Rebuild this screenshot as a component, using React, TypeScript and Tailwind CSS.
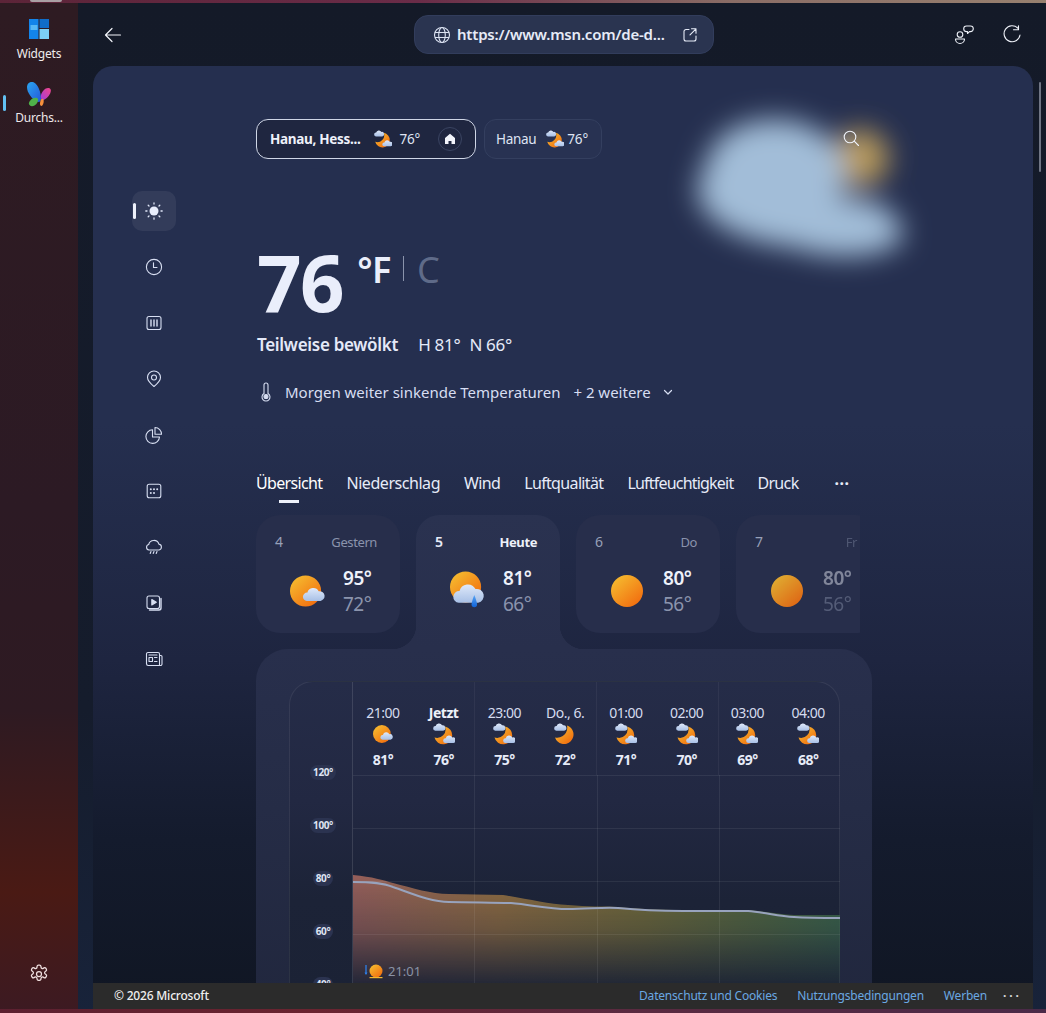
import React from "react";

const F = "[font-family:'Noto_Sans',sans-serif]";

function Defs() {
  return (
    <svg width="0" height="0" className="absolute">
      <defs>
        <linearGradient id="sun" x1="0.15" y1="0.1" x2="0.85" y2="0.9">
          <stop offset="0" stopColor="#f5b82e" />
          <stop offset="1" stopColor="#f26f10" />
        </linearGradient>
        <linearGradient id="cloud" x1="0" y1="0" x2="0" y2="1">
          <stop offset="0" stopColor="#dfe9fa" />
          <stop offset="1" stopColor="#a8c0e6" />
        </linearGradient>
        <linearGradient id="drop" x1="0" y1="0" x2="0" y2="1">
          <stop offset="0" stopColor="#5aa6f5" />
          <stop offset="1" stopColor="#0f62d8" />
        </linearGradient>
      </defs>
    </svg>
  );
}

const Cloud = ({ x, y, s = 1 }: { x: number; y: number; s?: number }) => (
  <path
    transform={`translate(${x} ${y}) scale(${s})`}
    d="M3 10a3 3 0 0 1 .4-6A4.4 4.4 0 0 1 11.6 3 3.5 3.5 0 0 1 13 10Z"
    fill="url(#cloud)"
  />
);

const SunCloudIcon = ({ size = 36 }: { size?: number }) => (
  <svg width={size} height={size} viewBox="0 0 36 36">
    <circle cx="16" cy="18" r="16" fill="url(#sun)" />
    <Cloud x={13} y={14} s={1.42} />
  </svg>
);

const SunIcon = ({ faded = false }: { faded?: boolean }) => (
  <svg width="34" height="34" viewBox="0 0 34 34" className={faded ? "opacity-90" : ""}>
    <circle cx="17" cy="17" r="16" fill="url(#sun)" />
  </svg>
);

const SunRainIcon = () => (
  <svg width="36" height="40" viewBox="0 0 36 40">
    <circle cx="16" cy="16" r="16" fill="url(#sun)" />
    <Cloud x={3} y={12} s={2} />
    <path d="M25 24c1.800 4.200 2.800 8 2.800 10a2.800 2.800 0 0 1-5.600 0c0-2 1-5.800 2.800-10Z" fill="url(#drop)" />
  </svg>
);

const MoonCloudIcon = ({ size = 22 }: { size?: number }) => (
  <svg width={size} height={size} viewBox="0 0 22 22">
    <path d="M12 3.500a9 9 0 1 1-10.500 11 8.500 8.500 0 0 0 10.500-11Z" fill="url(#sun)" />
    <Cloud x={0} y={0} s={0.78} />
    <Cloud x={10} y={12} s={0.8} />
  </svg>
);

const MoonIcon = () => (
  <svg width="22" height="22" viewBox="0 0 22 22">
    <path d="M13 2.500a9.500 9.500 0 1 1-12 12 10 10 0 0 0 12-12Z" fill="url(#sun)" />
    <Cloud x={0} y={0} s={0.78} />
  </svg>
);

const navStroke = { fill: "none", stroke: "#d8dff2", strokeWidth: 1.1, strokeLinecap: "round", strokeLinejoin: "round" } as const;

const navIcons: React.ReactNode[] = [
  <svg key="0" width="18" height="18" viewBox="0 0 18 18">
    <circle cx="9" cy="9" r="4.500" fill="#e8edfc" />
    <g stroke="#dfe5f7" strokeWidth="1.300" strokeLinecap="round">
      <path d="M9 .8v1.200M9 16v1.200M.8 9H2M16 9h1.200M3.200 3.200l.8.8M14 14l.8.8M3.200 14.800l.8-.8M14 4l.8-.8" />
    </g>
  </svg>,
  <svg key="1" width="18" height="18" viewBox="0 0 18 18" {...navStroke}>
    <circle cx="9" cy="9" r="7.600" />
    <path d="M8.500 4.800V9.500H12" />
  </svg>,
  <svg key="2" width="18" height="18" viewBox="0 0 18 18" {...navStroke}>
    <rect x="2" y="2.500" width="14" height="13" rx="2" />
    <path d="M6 6v6M9 6v6M12 6v6" strokeWidth="1.400" />
  </svg>,
  <svg key="3" width="18" height="18" viewBox="0 0 18 18" {...navStroke}>
    <path d="M9 16.500 C6 14 2.500 11 2.500 7.500a6.500 6.500 0 0 1 13 0C15.500 11 12 14 9 16.500Z" />
    <circle cx="9" cy="7.500" r="2.500" />
  </svg>,
  <svg key="4" width="18" height="18" viewBox="0 0 18 18" {...navStroke}>
    <path d="M7.500 3.800A6.800 6.800 0 1 0 14.500 11H7.500Z" />
    <path d="M10 1.500a6.500 6.500 0 0 1 6.500 6.800H10Z" />
  </svg>,
  <svg key="5" width="18" height="18" viewBox="0 0 18 18" {...navStroke}>
    <rect x="2.200" y="2.200" width="13.600" height="13.600" rx="2" />
    <g fill="#d8dff2" stroke="none">
      <circle cx="5.800" cy="7.300" r="1" /><circle cx="9" cy="7.300" r="1" /><circle cx="12.200" cy="7.300" r="1" />
      <circle cx="5.800" cy="11" r="1" /><circle cx="9" cy="11" r="1" />
    </g>
  </svg>,
  <svg key="6" width="18" height="18" viewBox="0 0 18 18" {...navStroke}>
    <path d="M4.500 12H4a2.800 2.800 0 0 1-.3-5.500 5.300 5.300 0 0 1 10.200-.4A3 3 0 0 1 14 12Z" />
    <path d="M6 13.500l-.8 2M9 13.500l-.8 2M12 13.500l-.8 2" />
  </svg>,
  <svg key="7" width="18" height="18" viewBox="0 0 18 18" {...navStroke}>
    <rect x="2" y="2" width="12.500" height="12.500" rx="2" />
    <path d="M6.800 5.500v5.500l4.500-2.700Z" fill="#d8dff2" />
    <path d="M16 4.500v9.500a2 2 0 0 1-2 2H4.500" strokeWidth="1.400" />
  </svg>,
  <svg key="8" width="18" height="18" viewBox="0 0 18 18" {...navStroke}>
    <path d="M3.200 15.500A1.700 1.700 0 0 1 1.500 13.800V4a1.500 1.500 0 0 1 1.500-1.500h10A1.500 1.500 0 0 1 14.500 4v11.500Z" />
    <path d="M14.500 5.500H16a1 1 0 0 1 1 1v7.500a1.500 1.500 0 0 1-1.500 1.500h-1" />
    <rect x="4" y="7.500" width="3.500" height="4" />
    <path d="M9.500 7.500H12M9.500 11.500H12M4 5h8" />
  </svg>,
];

const days = [
  { n: "4", l: "Gestern", hi: "95°", lo: "72°", icon: <SunCloudIcon /> },
  { n: "5", l: "Heute", hi: "81°", lo: "66°", icon: <SunRainIcon />, active: true },
  { n: "6", l: "Do", hi: "80°", lo: "56°", icon: <SunIcon /> },
  { n: "7", l: "Fr", hi: "80°", lo: "56°", icon: <SunIcon faded />, clipped: true },
];

const hours = [
  { t: "21:00", d: "81°", i: <SunCloudIcon size={20} /> },
  { t: "Jetzt", d: "76°", i: <MoonCloudIcon />, b: true },
  { t: "23:00", d: "75°", i: <MoonCloudIcon /> },
  { t: "Do., 6.", d: "72°", i: <MoonIcon /> },
  { t: "01:00", d: "71°", i: <MoonCloudIcon /> },
  { t: "02:00", d: "70°", i: <MoonCloudIcon /> },
  { t: "03:00", d: "69°", i: <MoonCloudIcon /> },
  { t: "04:00", d: "68°", i: <MoonCloudIcon /> },
];

function Chart() {
  const line = "M0 107 C20 107 30 108 40 112 C60 119 78 127 96 127 C115 127 140 128 158 128 C180 130 195 134 215 134 C235 134 250 132 265 133 C285 135 305 136 330 136 L395 136 C410 137 425 141 441 142 C455 143 470 143 487 143";
  const top = "M0 100 C20 102 30 105 40 108 C60 113 78 119 96 119 L150 120 C175 124 195 129 215 130 C235 132 250 131 265 132 C285 134 305 135 330 135 L395 135 C410 136 425 139 441 140 L487 140";
  return (
    <svg width="488" height="208" viewBox="0 0 488 208" className="block">
      <defs>
        <linearGradient id="areaH" x1="0" y1="0" x2="1" y2="0">
          <stop offset="0" stopColor="#9c625c" />
          <stop offset="0.3" stopColor="#967142" />
          <stop offset="0.6" stopColor="#77703a" />
          <stop offset="0.85" stopColor="#536c42" />
          <stop offset="1" stopColor="#3e6b4c" />
        </linearGradient>
        <linearGradient id="areaV" x1="0" y1="100" x2="0" y2="208" gradientUnits="userSpaceOnUse">
          <stop offset="0" stopColor="#fff" stopOpacity="0.95" />
          <stop offset="0.5" stopColor="#fff" stopOpacity="0.65" />
          <stop offset="1" stopColor="#fff" stopOpacity="0.08" />
        </linearGradient>
        <mask id="areaM">
          <rect width="488" height="208" fill="url(#areaV)" />
        </mask>
      </defs>
      <path d={`${top} L487 208 L0 208 Z`} fill="url(#areaH)" mask="url(#areaM)" />
      <g stroke="#ffffff" strokeOpacity="0.07">
        <path d="M0 .5H487M0 53.500H487M0 106.500H487M0 159.500H487" />
        <path d="M121.500 0V208M244.500 0V208M366.500 0V208" />
      </g>
      <path d={line} fill="none" stroke="#98a3bd" strokeWidth="2" />
    </svg>
  );
}

export default function App() {
  return (
    <div className={`${F} relative flex h-[1013px] w-[1046px] flex-col overflow-hidden bg-[#141a28] text-white`}>
      <Defs />
      <div className="h-[3px] bg-[linear-gradient(90deg,#5c2438,#6a2c48_40%,#8a6d66_70%,#97806f)]" />
      <div className="absolute left-[30px] top-0 h-[2px] w-[32px] rounded-b bg-[#a9a0a4]" />
      <div className="flex min-h-0 flex-1">
        <aside className="flex w-[78px] shrink-0 flex-col items-center bg-[linear-gradient(180deg,#2e1b22,#2c1a24_50%,#2e1a22_70%,#4a1a14_88%,#3c1a22)] pt-[15px]">
          <svg width="22" height="22" viewBox="0 0 22 22">
            <rect x="1" y="1" width="9.500" height="20" fill="#1384ea" />
            <rect x="11.500" y="1" width="9.500" height="9" fill="#0f6cc8" />
            <rect x="11.500" y="11" width="9.500" height="10" fill="#7cd0f7" />
            <rect x="2.500" y="7" width="7" height="5" fill="#58b8f5" />
          </svg>
          <span className="mt-[6px] text-[12px] leading-[16px] text-[#f0eced] tracking-[-0.2px]">Widgets</span>
          <div className="relative mt-[19px] flex w-full flex-col items-center">
            <div className="absolute left-[3px] top-[14px] h-[16px] w-[3px] rounded bg-[#62c0f2]" />
            <svg width="26" height="26" viewBox="0 0 26 26">
              <defs>
                <linearGradient id="w1" x1="0" y1="0" x2="1" y2="1"><stop offset="0" stopColor="#2aa6f0" /><stop offset="1" stopColor="#2456d8" /></linearGradient>
                <linearGradient id="w2" x1="1" y1="0" x2="0" y2="1"><stop offset="0" stopColor="#f0468a" /><stop offset="1" stopColor="#a43cd8" /></linearGradient>
              </defs>
              <path d="M1 6C1 2 5 0 8 1.500 12 3.500 15 11 15 18c0 2.500-2 3.500-4 2.500C6 18 1 12 1 6Z" fill="url(#w1)" />
              <path d="M15 14c1-3.500 4-7 7-7 2.500 0 3.500 2 2.500 4.500-1 3-4 6.500-7 7.500-2 .5-3.200-2-2.500-5Z" fill="url(#w2)" />
              <path d="M3.500 24c-1.500-1.500 0-4.500 3-6.500 2-1.300 5-1 5.500.5.500 2-1 5-3.500 6.500-1.800 1-3.700 1-5-.5Z" fill="#4fb24a" />
              <path d="M14.500 24.500c-1-1-.5-4 .5-6 .6-1 2-1 2.500 0 .6 1.500 0 4.500-1 5.800-.6.800-1.500.900-2 .2Z" fill="#f6903c" />
            </svg>
            <span className="mt-[3px] text-[12px] leading-[16px] text-[#eee8ea] tracking-[-0.2px]">Durchs...</span>
          </div>
          <svg className="mt-auto mb-[29px]" width="20" height="20" viewBox="0 0 24 24" fill="none" stroke="#f0e0e0" strokeWidth="1.500" strokeLinecap="round" strokeLinejoin="round">
            <path d="M9.670 2.900a1.700 1.700 0 0 1 1.690-1.500h1.280a1.700 1.700 0 0 1 1.690 1.500l.13 1.100a1.700 1.700 0 0 0 2.560 1.250l.96-.56a1.700 1.700 0 0 1 2.220.4l.64 1.100a1.700 1.700 0 0 1-.45 2.220l-.88.660a1.700 1.700 0 0 0 0 2.860l.88.660a1.700 1.700 0 0 1 .45 2.220l-.64 1.100a1.700 1.700 0 0 1-2.220.4l-.96-.56a1.700 1.700 0 0 0-2.560 1.250l-.13 1.100a1.700 1.700 0 0 1-1.690 1.500h-1.280a1.700 1.700 0 0 1-1.690-1.500l-.13-1.100a1.700 1.700 0 0 0-2.560-1.250l-.96.56a1.700 1.700 0 0 1-2.220-.4l-.64-1.100a1.700 1.700 0 0 1 .45-2.220l.88-.660a1.700 1.700 0 0 0 0-2.860l-.88-.660a1.700 1.700 0 0 1-.45-2.220l.64-1.100a1.700 1.700 0 0 1 2.220-.4l.96.56A1.700 1.700 0 0 0 9.540 4Z" />
            <circle cx="12" cy="12" r="3" />
          </svg>
        </aside>

        <main className="flex min-w-0 flex-1 flex-col bg-[linear-gradient(180deg,#141a28,#151c2c_70%,#18233a)] pl-[15px] pr-[13px]">
          <header className="relative flex h-[63px] shrink-0 items-center">
            <svg className="ml-[10px]" width="20" height="20" viewBox="0 0 20 20" fill="none" stroke="#f2f4fa" strokeWidth="1.200" strokeLinecap="round" strokeLinejoin="round">
              <path d="M17.500 10H2.500M9 3.500 2.500 10 9 16.500" />
            </svg>
            <div className="ml-[291px] flex h-[39px] w-[300px] items-center rounded-[14px] border border-[#323d5c] bg-[#2a3450] pl-[18px] pr-[16px]">
              <svg width="18" height="18" viewBox="0 0 18 18" fill="none" stroke="#dbe2f2" strokeWidth="1.100">
                <circle cx="9" cy="9" r="7.500" />
                <ellipse cx="9" cy="9" rx="3.300" ry="7.500" />
                <path d="M2 6.500h14M2 11.500h14" />
              </svg>
              <span className="ml-[6px] text-[15px] font-semibold tracking-[-0.2px] text-[#e6ebf7]">https://www.msn.com/de-d...</span>
              <svg className="ml-auto" width="14" height="14" viewBox="0 0 14 14" fill="none" stroke="#e6ebf7" strokeWidth="1.100" strokeLinecap="round" strokeLinejoin="round">
                <path d="M6 1.500H3a2 2 0 0 0-2 2v7.500a2 2 0 0 0 2 2h8a2 2 0 0 0 2-2V8" />
                <path d="M8.500.8H13v4.500M13 .8 7 6.800" />
              </svg>
            </div>
            <svg className="ml-[240px]" width="20" height="20" viewBox="0 0 20 20" fill="none" stroke="#eef1f8" strokeWidth="1.100" strokeLinejoin="round">
              <circle cx="6" cy="9.500" r="2.800" />
              <path d="M1.500 14h9a4.500 4.500 0 0 1-9 0Z" />
              <path d="M12.500 1h4a2.800 2.800 0 0 1 0 5.600h-1l-2 1.900V6.600h-1a2.800 2.800 0 0 1 0-5.600Z" />
            </svg>
            <svg className="ml-[28px]" width="20" height="20" viewBox="0 0 20 20" fill="none" stroke="#eef1f8" strokeWidth="1.100" strokeLinecap="round" strokeLinejoin="round">
              <path d="M16 3.300A8 8 0 1 0 18 10" />
              <path d="M11.500 3.800H16.500V-.2" transform="translate(0 1)" />
            </svg>
          </header>

          <section className="relative flex min-h-0 flex-1 flex-col overflow-hidden rounded-t-[20px] bg-[linear-gradient(180deg,#252f4f_0%,#252f4f_38%,#1e2540_63%,#141b2d_82%,#101623_100%)]">
            <svg className="absolute left-[570px] top-[10px]" width="280" height="220" viewBox="-10 -10 280 220">
              <defs>
                <filter id="blurA" x="-30%" y="-30%" width="160%" height="160%"><feGaussianBlur stdDeviation="14" /></filter>
              </defs>
              <g filter="url(#blurA)">
                <circle cx="187" cy="72" r="29" fill="#b89a5c" />
                <path d="M36 70C46 38 100 22 142 43 172 58 177 90 167 113 202 108 230 128 230 152 215 172 160 176 120 161 68 156 16 132 26 95Z" fill="#a2bdd8" />
              </g>
            </svg>
            <svg className="absolute left-[750px] top-[64px]" width="17" height="17" viewBox="0 0 17 17" fill="none" stroke="#eef1f8" strokeWidth="1.100" strokeLinecap="round">
              <circle cx="7" cy="7" r="5.800" />
              <path d="M11.200 11.200 15.500 15.500" />
            </svg>

            <div className="relative flex min-h-0 flex-1 overflow-hidden">
              <nav className="w-[163px] shrink-0 pt-[117px]">
                {navIcons.map((icon, i) => (
                  <div key={i} className="flex h-[56px] items-center pl-[39px]">
                    <div className={`relative flex h-[40px] w-[44px] items-center justify-center rounded-[10px] ${i === 0 ? "bg-[#333c5a]" : ""}`}>
                      {i === 0 && <div className="absolute left-[1px] top-[12px] h-[16px] w-[3px] rounded bg-[#eef1fa]" />}
                      {icon}
                    </div>
                  </div>
                ))}
              </nav>

              <div className="min-w-0 flex-1 pt-[53px]">
                <div className="flex gap-[8px]">
                  <div className="flex h-[40px] w-[220px] items-center rounded-[12px] border border-[#cfd6e6] bg-[#1f2640] pl-[13px] pr-[13px] text-[13.500px]">
                    <span className="font-bold tracking-[-0.3px] text-[#eef1fa]">Hanau, Hess...</span>
                    <span className="ml-[13px]"><MoonCloudIcon size={18} /></span>
                    <span className="ml-[8px] tracking-[-0.2px] text-[#dfe4f2]">76°</span>
                    <span className="ml-auto flex h-[24px] w-[24px] items-center justify-center rounded-full border border-[#3a4462]">
                      <svg width="12" height="12" viewBox="0 0 12 12"><path d="M6 .8 11 5v6H7.500V8h-3v3H1V5Z" fill="#f2f4fb" /></svg>
                    </span>
                  </div>
                  <div className="flex h-[40px] w-[118px] items-center rounded-[12px] border border-[#343f5f] bg-[#283252] pl-[11px] text-[13.500px] text-[#dfe4f2]">
                    <span className="tracking-[-0.3px]">Hanau</span>
                    <span className="ml-[10px]"><MoonCloudIcon size={18} /></span>
                    <span className="ml-[3px] tracking-[-0.2px]">76°</span>
                  </div>
                </div>

                <div className="mt-[84px] flex h-[74px] items-start pl-[1px]">
                  <span className="text-[78px] font-bold leading-[78px] tracking-[-1.500px] text-[#eaeefb]">76</span>
                  <span className="ml-[14px] mt-[2px] text-[36px] font-semibold leading-[50px] tracking-[-0.5px] text-[#eaeefb]">°F</span>
                  <span className="ml-[12px] mt-[13px] h-[25px] w-px bg-[#8a93ab]" />
                  <span className="ml-[13px] mt-[2px] text-[36px] leading-[50px] text-[#5f6b89]">C</span>
                </div>

                <div className="mt-[16px] flex pl-[1px] text-[17px] leading-[24px] tracking-[-0.3px] text-[#e4e9f8]">
                  <span className="font-semibold">Teilweise bewölkt</span>
                  <span className="ml-[20px]">H 81°</span>
                  <span className="ml-[9px]">N 66°</span>
                </div>

                <div className="mt-[23px] flex items-center pl-[3px] text-[15px] leading-[24px] text-[#d7def2]">
                  <svg width="14" height="20" viewBox="0 0 14 20" fill="none" stroke="#d7def2" strokeWidth="1.100">
                    <path d="M5 3a2 2 0 0 1 4 0v8.500a4 4 0 1 1-4 0Z" />
                    <circle cx="7" cy="14.500" r="2" fill="#d7def2" />
                  </svg>
                  <span className="ml-[12px]">Morgen weiter sinkende Temperaturen</span>
                  <span className="ml-[13px]">+ 2 weitere</span>
                  <svg className="ml-[11px]" width="12" height="12" viewBox="0 0 12 12" fill="none" stroke="#d7def2" strokeWidth="1.200" strokeLinecap="round" strokeLinejoin="round">
                    <path d="M2.500 4.500 6 8l3.500-3.500" />
                  </svg>
                </div>

                <div className="mt-[67px] flex h-[24px] w-[604px] items-center gap-[24px] text-[16px] tracking-[-0.65px] text-[#e6ebf8]">
                  <span className="relative text-white">
                    Übersicht
                    <span className="absolute left-[23px] top-[29px] h-[3px] w-[20px] bg-[#eef1fa]" />
                  </span>
                  <span className="tracking-[-0.45px]">Niederschlag</span>
                  <span>Wind</span>
                  <span>Luftqualität</span>
                  <span className="tracking-[-0.8px]">Luftfeuchtigkeit</span>
                  <span>Druck</span>
                  <span className="ml-[12px] font-bold tracking-[0.5px]">···</span>
                </div>

                <div className="mt-[20px] flex h-[134px] w-[604px] gap-[16px] overflow-hidden">
                  {days.map((d) => (
                    <div
                      key={d.n}
                      className={`relative w-[144px] shrink-0 pl-[19px] pr-[23px] pt-[17px] ${
                        d.active
                          ? "h-[134px] rounded-t-[24px] bg-[linear-gradient(180deg,#2a3250,#282f4c)]"
                          : "h-[118px] rounded-[24px] bg-[#272e4b]"
                      }`}
                    >
                      <div className="flex items-center justify-between text-[13px] leading-[20px]">
                        <span className={`text-[14px] ${d.active ? "font-semibold text-[#e6ebf8]" : "text-[#97a0b8]"}`}>{d.n}</span>
                        <span className={`tracking-[-0.4px] ${d.active ? "font-bold text-[#eef1fa]" : "text-[#8a93ac]"} ${d.clipped ? "opacity-40" : ""}`}>{d.l}</span>
                      </div>
                      <div className="mt-[13px] flex items-center">
                        <div className="ml-[15px] flex w-[35px] shrink-0">{d.icon}</div>
                        <div className={`ml-[18px] text-center text-[19px] leading-[26px] tracking-[-0.5px] ${d.clipped ? "opacity-45" : ""}`}>
                          <div className="font-semibold text-[#eef1fa]">{d.hi}</div>
                          <div className="text-[#8b94ad]">{d.lo}</div>
                        </div>
                      </div>
                      {d.active && (
                        <>
                          <div className="absolute left-[-24px] bottom-0 h-[24px] w-[24px] bg-[radial-gradient(circle_at_0_0,transparent_24px,#282f4c_24.5px)]" />
                          <div className="absolute right-[-24px] bottom-0 h-[24px] w-[24px] bg-[radial-gradient(circle_at_100%_0,transparent_24px,#282f4c_24.5px)]" />
                        </>
                      )}
                    </div>
                  ))}
                </div>

                <div className="h-[400px] w-[616px] rounded-t-[32px] bg-[linear-gradient(180deg,#282f4c,#252c46_40%,#20263c_100%)] pl-[33px] pt-[32px]">
                  <div className="flex h-[400px] w-[551px] rounded-t-[24px] border border-[#ffffff14] bg-[linear-gradient(180deg,#252c48,#222842_30%,#1c2337_55%,#1a2133)]">
                    <div className="w-[63px] shrink-0 border-r border-[#ffffff1f] pl-[4px] pt-[83px]">
                      {["120°", "100°", "80°", "60°", "40°"].map((v) => (
                        <div key={v} className="flex h-[53px] items-start justify-center">
                          <span className="rounded-[8px] bg-[#2b3350] px-[3px] text-[10px] font-bold leading-[15px] tracking-[-0.4px] text-[#dfe4f2]">{v}</span>
                        </div>
                      ))}
                    </div>
                    <div className="relative min-w-0 flex-1">
                      <div className="grid h-[93px] grid-cols-8 pt-[23px]">
                        {hours.map((h) => (
                          <div key={h.t} className="flex flex-col items-center pr-[1px]">
                            <span className={`whitespace-nowrap text-[14px] leading-[16px] tracking-[-0.5px] ${h.b ? "font-bold text-[#eef1fa]" : "text-[#d5dbee]"}`}>{h.t}</span>
                            <div className="mt-[2px] flex h-[22px] items-center">{h.i}</div>
                            <span className="mt-[6px] text-[14px] font-bold leading-[18px] tracking-[-0.5px] text-[#e6ebf8]">{h.d}</span>
                          </div>
                        ))}
                      </div>
                      <div className="absolute left-0 top-0 h-[93px] w-full">
                        <div className="absolute left-[121px] top-0 h-full w-px bg-[#ffffff0d]" />
                        <div className="absolute left-[243px] top-0 h-full w-px bg-[#ffffff0d]" />
                        <div className="absolute left-[365px] top-0 h-full w-px bg-[#ffffff0d]" />
                      </div>
                      <Chart />
                      <div className="absolute left-[11px] top-[281px] flex items-center">
                        <svg width="20" height="16" viewBox="0 0 20 16">
                          <path d="M2 2v9" stroke="#2f7fe6" strokeWidth="1.300" />
                          <path d="M0.500 9.500 2 12l1.500-2.500Z" fill="#2f7fe6" />
                          <circle cx="12" cy="8" r="6.500" fill="url(#sun)" />
                          <rect x="5.500" y="14" width="13" height="1.200" fill="#f5b82e" />
                        </svg>
                        <span className="ml-[4px] text-[13px] leading-[16px] text-[#8a92a6]">21:01</span>
                      </div>
                    </div>
                  </div>
                </div>
              </div>
            </div>

            <footer className="relative flex h-[26px] shrink-0 items-center bg-[#2b2b2b] pl-[21px] pr-[11px] text-[12px] tracking-[-0.2px]">
              <span className="font-medium text-[#f0f0f0]">© 2026 Microsoft</span>
              <span className="ml-auto text-[#6aa8e2]">Datenschutz und Cookies</span>
              <span className="ml-[20px] text-[#6aa8e2]">Nutzungsbedingungen</span>
              <span className="ml-[20px] text-[#6aa8e2]">Werben</span>
              <span className="ml-[16px] font-bold tracking-[3px] text-[#d8d8d8]">···</span>
            </footer>
          </section>
          <div className="h-[4px] shrink-0" />
        </main>
      </div>
      <div className="absolute left-[1039px] top-[82px] h-[90px] w-[2px] rounded bg-[#6f7584]" />
      <div className="absolute bottom-0 left-0 h-[4px] w-full bg-[linear-gradient(90deg,#5c2030,#6a2430_30%,#5a2a40_60%,#4a2a48)]" />
    </div>
  );
}
